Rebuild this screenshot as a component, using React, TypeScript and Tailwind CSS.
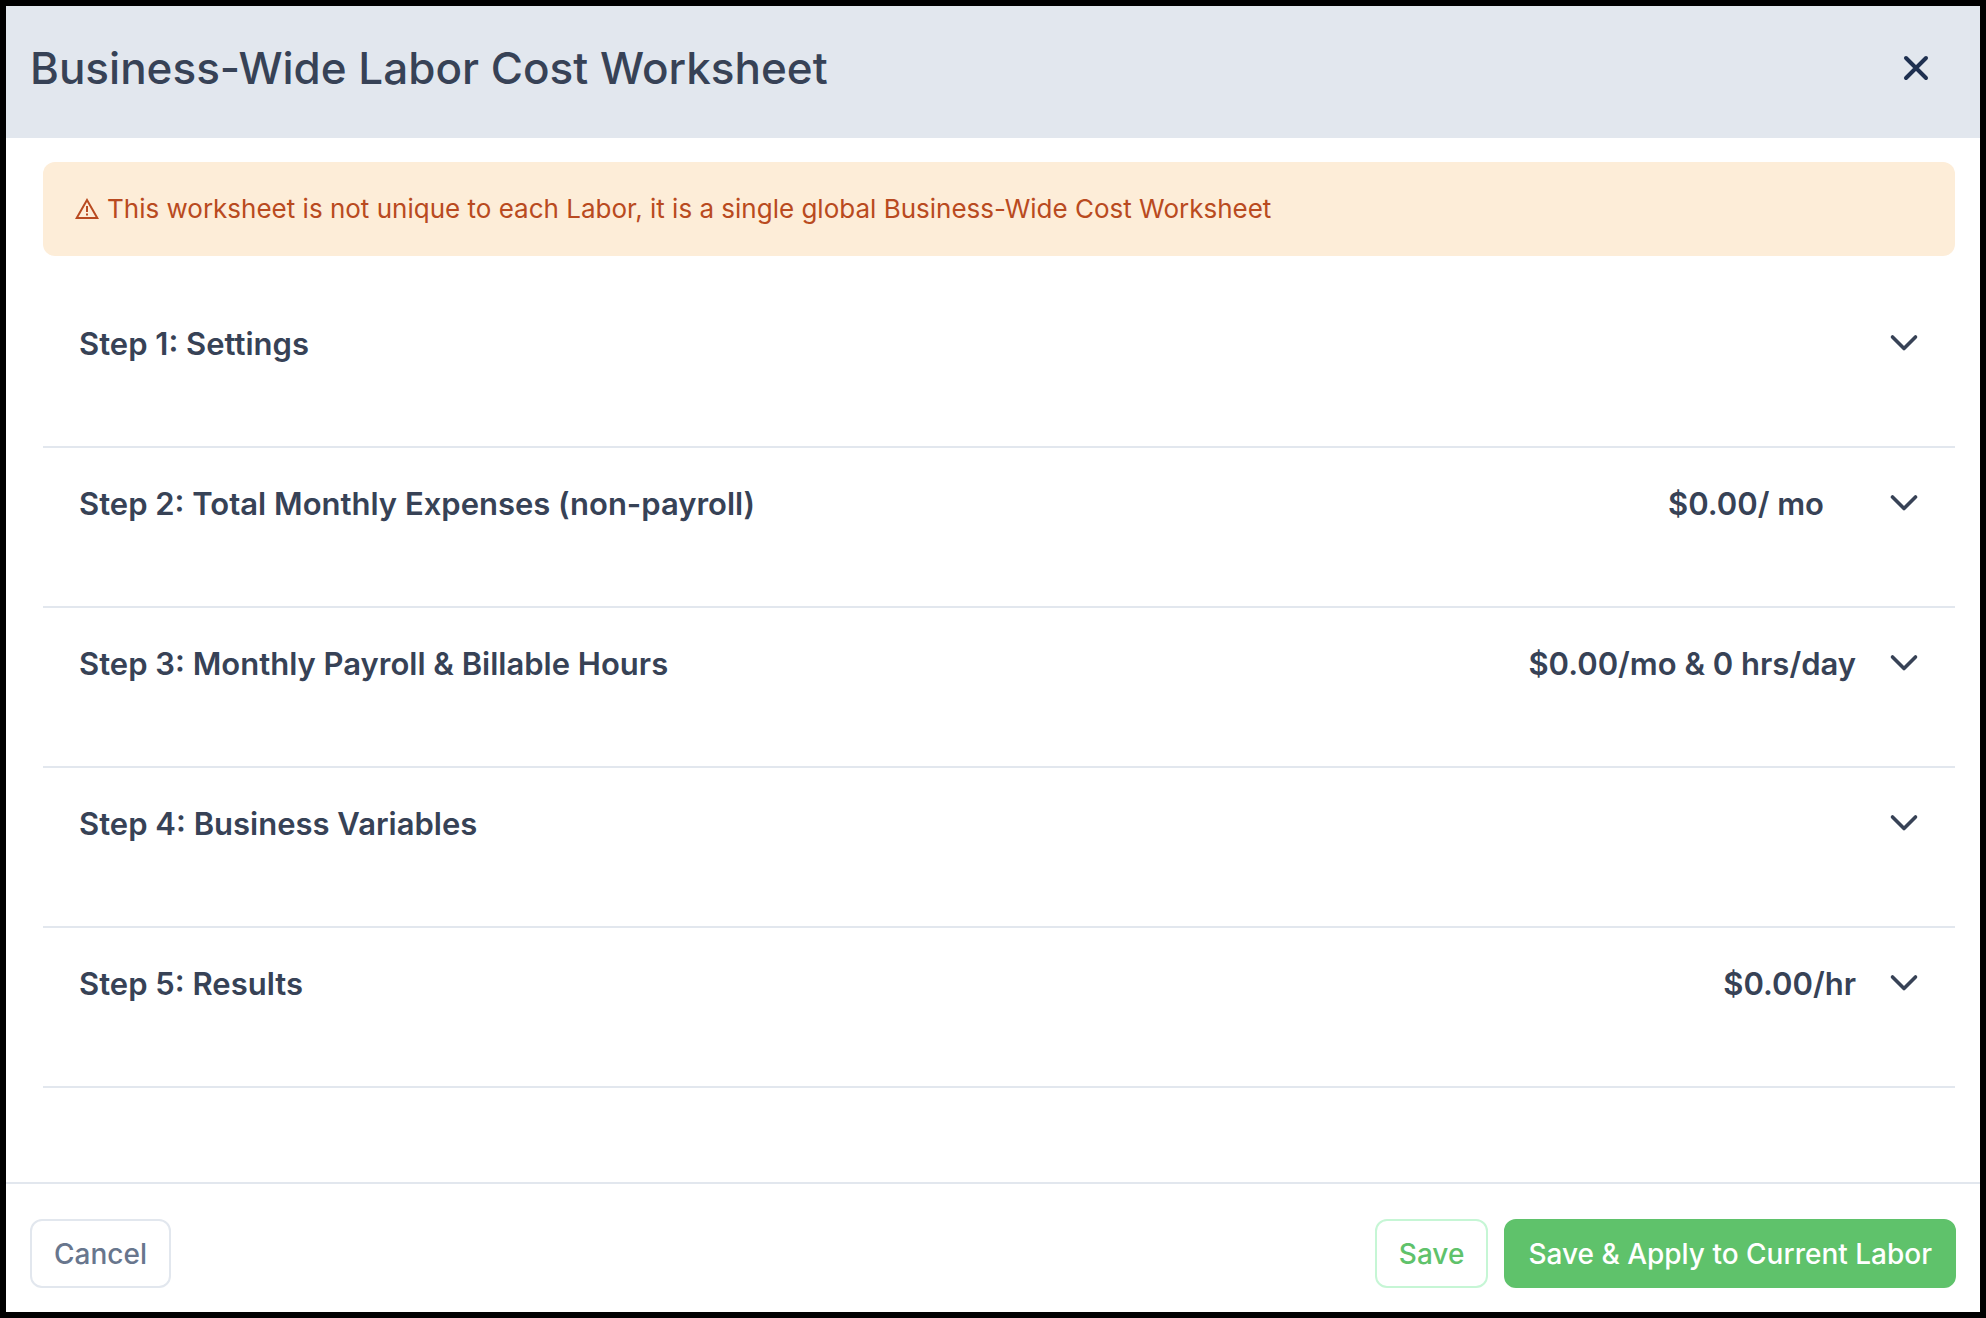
import React from "react";

interface Step {
  title: string;
  value?: string;
  valueClass?: string;
}

const steps: Step[] = [
  { title: "Step 1: Settings" },
  { title: "Step 2: Total Monthly Expenses (non-payroll)", value: "$0.00/ mo", valueClass: "mr-8" },
  { title: "Step 3: Monthly Payroll & Billable Hours", value: "$0.00/mo & 0 hrs/day" },
  { title: "Step 4: Business Variables" },
  { title: "Step 5: Results", value: "$0.00/hr" }
];

export default function App() {
  return (
    <div className="min-h-screen flex flex-col bg-white border-6 border-black font-['Inter',sans-serif] text-[#374256]">

      {/* Header */}
      <header className="flex items-start justify-between bg-[#e2e7ee] pl-6 pr-10 pt-[30px] pb-[38px]">
        <h1 className="text-[44px] leading-[64px] font-medium">
          Business-Wide Labor Cost Worksheet
        </h1>
        <button type="button" aria-label="Close" className="p-2 mt-2 text-[#1e3050]">
          <CloseIcon className="w-8 h-8" />
        </button>
      </header>

      <main className="flex-1 pl-[37px] pr-[25px] pt-6">
        {/* Global notice */}
        <div role="alert" className="flex items-center gap-2 h-[94px] pl-8 rounded-xl bg-[#fdedd8] text-[#b94a20] text-[26px] leading-[40px]">
          <WarningIcon className="w-6 h-6 shrink-0" />
          <p>This worksheet is not unique to each Labor, it is a single global Business-Wide Cost Worksheet</p>
        </div>

        {/* Steps */}
        <div className="mt-8">
          {steps.map((step) => (
            <section key={step.title} className="border-b-2 border-[#e2e7ee] pb-[78px]">
              <button
                type="button"
                aria-expanded={false}
                className="w-full flex items-center justify-between pt-8 pl-9 pr-[35px] text-left text-[31px] leading-[48px] font-semibold"
              >
                <span>{step.title}</span>
                <span className="flex items-center gap-8">
                  {step.value && <span className={step.valueClass}>{step.value}</span>}
                  <ChevronIcon className="w-8 h-8" />
                </span>
              </button>
            </section>
          ))}
        </div>
      </main>

      {/* Footer actions */}
      <footer className="flex items-center justify-between border-t-2 border-[#e2e7ee] px-6 pt-[35px] pb-6 text-[28px] leading-[40px] font-medium">
        <button type="button" className="h-[69px] px-[22px] rounded-xl border-2 border-[#e2e7ee] text-[#68768d]">
          Cancel
        </button>
        <div className="flex gap-4">
          <button type="button" className="h-[69px] px-[22px] rounded-xl border-2 border-[#c6f6d5] text-[#5fc26b]">
            Save
          </button>
          <button type="button" className="h-[69px] px-[22px] rounded-xl border-2 border-[#5fc26b] bg-[#5fc26b] text-white">
            Save &amp; Apply to Current Labor
          </button>
        </div>
      </footer>
    </div>
  );
}

function CloseIcon(props: React.SVGProps<SVGSVGElement>) {
  return (
    <svg viewBox="0 0 32 32" fill="none" stroke="currentColor" strokeWidth="4" strokeLinecap="round" {...props}>
      <path d="M6 6l20 20M26 6L6 26" />
    </svg>
  );
}

function ChevronIcon(props: React.SVGProps<SVGSVGElement>) {
  return (
    <svg viewBox="0 0 32 32" fill="none" stroke="currentColor" strokeWidth="3.6" strokeLinecap="round" strokeLinejoin="round" {...props}>
      <path d="M4.5 9L16 20.5 27.5 9" />
    </svg>
  );
}

function WarningIcon(props: React.SVGProps<SVGSVGElement>) {
  return (
    <svg viewBox="0 0 24 24" fill="none" stroke="currentColor" strokeWidth="2" {...props}>
      <path d="M12 3L1.7 21h20.6z" />
      <path d="M12 9v6M12 16.5v2" />
    </svg>
  );
}
